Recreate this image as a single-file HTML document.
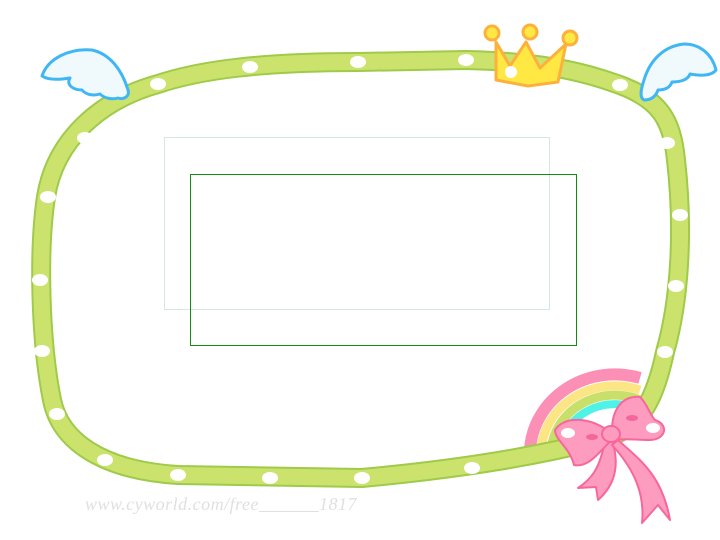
<!DOCTYPE html>
<html><head><style>
html,body{margin:0;padding:0;background:#fff;width:720px;height:540px;overflow:hidden;position:relative}
.b1{position:absolute;left:164px;top:137px;width:384px;height:171px;border:1px solid #d5e6e4}
.b2{position:absolute;left:190px;top:174px;width:385px;height:170px;border:1px solid #138a13}
.wm{position:absolute;left:85px;top:494px;font:italic 18px "Liberation Serif",serif;color:#e0e0e0;letter-spacing:0.5px}
</style></head><body>
<svg width="720" height="540" style="position:absolute;left:0;top:0">
<g fill="none">
<path d="M530,450 A85,80 0 0 1 640,378" stroke="#fb8fb5" stroke-width="12"/>
<path d="M541,450 A74,69 0 0 1 640,390" stroke="#fbe584" stroke-width="9"/>
<path d="M551,450 A64,60 0 0 1 640,400" stroke="#c8e06a" stroke-width="9"/>
<path d="M560,450 A55,52 0 0 1 640,410" stroke="#4ef2e6" stroke-width="8"/>
</g>
<g fill="none" stroke-linejoin="round">
<path d="M158,84 C200,70 260,62 358,62 L466,60 C560,62 600,78 620,85 C660,100 672,120 676,160 C684,230 680,300 665,352 C655,400 640,430 600,440 C540,455 470,468 362,478 L178,475 C100,470 60,440 52,400 C40,340 38,250 46,197 C55,140 100,100 158,84 Z" stroke="#9fca4a" stroke-width="20"/>
<path d="M158,84 C200,70 260,62 358,62 L466,60 C560,62 600,78 620,85 C660,100 672,120 676,160 C684,230 680,300 665,352 C655,400 640,430 600,440 C540,455 470,468 362,478 L178,475 C100,470 60,440 52,400 C40,340 38,250 46,197 C55,140 100,100 158,84 Z" stroke="#cbe36c" stroke-width="16"/>
</g>
<g fill="#fff">
<ellipse cx="158" cy="84" rx="8" ry="6"/><ellipse cx="250" cy="67" rx="8" ry="6"/><ellipse cx="358" cy="62" rx="8" ry="6"/><ellipse cx="466" cy="60" rx="8" ry="6"/><ellipse cx="620" cy="85" rx="8" ry="6"/><ellipse cx="667" cy="143" rx="8" ry="6"/><ellipse cx="680" cy="215" rx="8" ry="6"/><ellipse cx="676" cy="286" rx="8" ry="6"/><ellipse cx="665" cy="352" rx="8" ry="6"/><ellipse cx="472" cy="468" rx="8" ry="6"/><ellipse cx="362" cy="478" rx="8" ry="6"/><ellipse cx="270" cy="478" rx="8" ry="6"/><ellipse cx="178" cy="475" rx="8" ry="6"/><ellipse cx="105" cy="460" rx="8" ry="6"/><ellipse cx="57" cy="414" rx="8" ry="6"/><ellipse cx="42" cy="351" rx="8" ry="6"/><ellipse cx="40" cy="280" rx="8" ry="6"/><ellipse cx="48" cy="197" rx="8" ry="6"/><ellipse cx="85" cy="138" rx="8" ry="6"/>
</g>
<!-- crown -->
<path d="M496,42 L510,66 L526,42 L540,68 L566,44 L558,82 L528,86 L496,80 Z" fill="#ffe844" stroke="#fdb13c" stroke-width="3" stroke-linejoin="round"/>
<g fill="#ffe844" stroke="#fdb13c" stroke-width="3"><circle cx="492" cy="33" r="7"/><circle cx="530" cy="32" r="7"/><circle cx="570" cy="38" r="7"/></g>
<circle cx="511" cy="72" r="6" fill="#fff"/>
<!-- wings -->
<path d="M42,76 C48,58 70,48 92,50 C110,54 122,70 128,90 C130,96 124,100 118,98 C112,100 104,98 100,94 C94,96 86,95 82,90 C72,90 66,84 70,78 C58,80 48,80 42,76 Z" fill="#f0fafd" stroke="#41b6f4" stroke-width="3" stroke-linejoin="round"/>
<path d="M716,70 C712,54 700,44 684,44 C664,46 650,60 644,80 C640,92 640,98 644,100 C652,100 656,96 658,90 C664,90 670,88 672,82 C680,82 688,80 690,74 C700,76 712,76 716,70 Z" fill="#f0fafd" stroke="#41b6f4" stroke-width="3" stroke-linejoin="round"/>
<!-- bow -->
<g fill="#fd9cbf" stroke="#f8679b" stroke-width="2" stroke-linejoin="round">
<path d="M605,440 C600,470 590,480 578,488 L596,487 L598,500 C615,485 620,465 612,440 Z"/>
<path d="M618,440 C640,460 662,475 670,520 L658,505 L642,523 C645,495 635,470 612,445 Z"/>
<path d="M607,430 C590,418 565,415 555,430 C555,440 570,448 574,465 C590,468 600,450 612,440 Z"/>
<path d="M612,430 C612,410 622,395 640,397 C648,405 650,415 655,420 C670,425 665,440 650,440 C635,440 625,438 612,440 Z"/>
<ellipse cx="611" cy="434" rx="9" ry="8"/>
</g>
<g fill="#fff"><ellipse cx="568" cy="433" rx="7" ry="5"/><ellipse cx="653" cy="428" rx="7" ry="5"/></g>
<g fill="#f4679c"><ellipse cx="592" cy="437" rx="6" ry="3"/><ellipse cx="632" cy="418" rx="6" ry="3"/></g>
</svg>
<div class="b1"></div><div class="b2"></div>
<div class="wm">www.cyworld.com/free<span style="text-decoration:underline">&nbsp;&nbsp;&nbsp;&nbsp;&nbsp;&nbsp;&nbsp;&nbsp;&nbsp;&nbsp;&nbsp;&nbsp;</span>1817</div>
</body></html>
